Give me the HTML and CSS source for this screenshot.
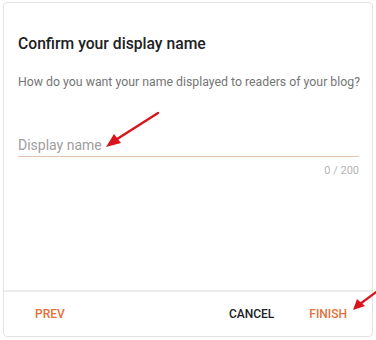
FILE: index.html
```html
<!DOCTYPE html>
<html>
<head>
<meta charset="utf-8">
<link rel="stylesheet" href="styles.css">
</head>
<body>
<div class="card">
  <div class="content">
    <h1 class="title">Confirm your display name</h1>
    <p class="subtitle">How do you want your name displayed to readers of your blog?</p>
    <div class="field">
      <div class="input">Display name</div>
      <div class="counter">0 / 200</div>
    </div>
  </div>
  <div class="footer">
    <span class="btn accent">Prev</span>
    <span class="spacer"></span>
    <span class="btn cancel">Cancel</span>
    <span class="btn accent">Finish</span>
  </div>
</div>
<svg class="arrow arrow-one" width="60" height="40" viewBox="0 0 60 40">
  <line x1="56" y1="3" x2="12" y2="31" stroke="#d9141c" stroke-width="2.4" stroke-linecap="round"/>
  <polygon points="4,37 12,24 19,33" fill="#d9141c"/>
</svg>
<svg class="arrow arrow-two" width="30" height="26" viewBox="0 0 30 26">
  <line x1="30" y1="2" x2="10" y2="17" stroke="#d9141c" stroke-width="2.2" stroke-linecap="round"/>
  <polygon points="3,23 7,12 15,19" fill="#d9141c"/>
</svg>
</body>
</html>
```
FILE: styles.css
```css
html, body {
  margin: 0;
  padding: 0;
  background: #ffffff;
}
body {
  width: 376px;
  height: 340px;
  position: relative;
  overflow: hidden;
  font-family: Roboto, "Liberation Sans", Arial, sans-serif;
}
.card {
  box-sizing: border-box;
  margin: 2px 3px 0 3px;
  height: 335px;
  border: 1px solid #e3e3e3;
  border-radius: 4px;
  display: flex;
  flex-direction: column;
}
.content {
  flex: 1;
  padding: 31px 10px 0 14px;
}
.title {
  margin: 0;
  font-size: 15.7px;
  line-height: 20px;
  font-weight: 500;
  color: #202124;
}
.subtitle {
  margin: 18px 0 0 0;
  font-size: 12.3px;
  line-height: 20px;
  color: #757575;
  white-space: nowrap;
}
.field {
  margin-top: 43px;
}
.input {
  font-size: 14px;
  line-height: 20px;
  color: #9e9e9e;
  padding-bottom: 1px;
  border-bottom: 1px solid #e0c2b0;
  margin-right: 3px;
}
.counter {
  margin-top: 7px;
  margin-right: 3px;
  text-align: right;
  font-size: 11px;
  line-height: 14px;
  color: #b5b5b5;
}
.footer {
  height: 46px;
  border-top: 2px solid #ececec;
  display: flex;
  align-items: center;
  padding: 0 17px 0 23px;
  box-sizing: border-box;
}
.spacer {
  flex: 1;
}
.btn {
  font-size: 12px;
  font-weight: 500;
  text-transform: uppercase;
  color: #202124;
  padding: 0 8px;
}
.btn.cancel {
  margin-right: 19px;
}
.btn.accent {
  color: #e5703a;
}
.arrow {
  position: absolute;
}
.arrow-one {
  left: 102px;
  top: 110px;
}
.arrow-two {
  left: 350px;
  top: 287px;
}
```
